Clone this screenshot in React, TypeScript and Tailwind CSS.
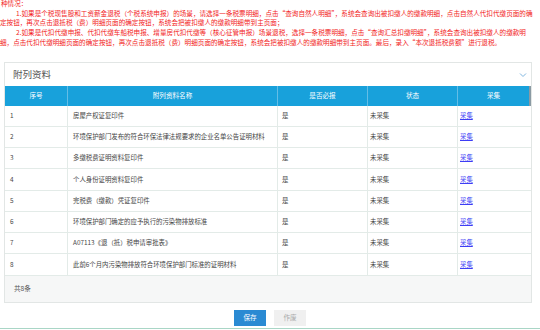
const rows = [
  "房屋产权证复印件",
  "环境保护部门发布的符合环保法律法规要求的企业名单公告证明材料",
  "多缴税费证明资料复印件",
  "个人身份证明资料复印件",
  "完税费（缴款）凭证复印件",
  "环境保护部门确定的应予执行的污染物排放标准",
  "A07113《退（抵）税申请审批表》",
  "此前6个月内污染物排放符合环境保护部门标准的证明材料",
];

const font = { fontFamily: '"Noto Sans CJK SC", "Noto Sans", sans-serif' };

function Cell({ w, children, last }: { w: string; children?: React.ReactNode; last?: boolean }) {
  return (
    <div
      className={`${w} h-full flex items-center px-[5px] ${last ? "" : "border-r border-[#e3ebe8]"}`}
    >
      {children}
    </div>
  );
}

export default function App() {
  return (
    <div className="w-[540px] h-[330px] bg-white overflow-hidden relative" style={font}>
      <div className="text-[6.6px] leading-[9.7px] text-[#f21c1c] mt-[-1px] whitespace-nowrap">
        <div className="pl-[1px]">种情况：</div>
        <div className="pl-[16px]">
          1.如果是个税现售股和工资薪金退税（个税系统申报）的场景，请选择一条税票明细，点击“查询自然人明细”，系统会查询出被扣缴人的缴款明细，点击自然人代扣代缴页面的确
        </div>
        <div>定按钮，再次点击退抵税（费）明细页面的确定按钮，系统会把被扣缴人的缴款明细带到主页面；</div>
        <div className="pl-[16px]">
          2.如果是代扣代缴申报、代扣代缴车船税申报、增量房代扣代缴等（核心征管申报）场景退税，选择一条税票明细，点击“查询汇总扣缴明细”，系统会查询出被扣缴人的缴款明
        </div>
        <div>
          细，点击代扣代缴明细页面的确定按钮，再次点击退抵税（费）明细页面的确定按钮，系统会把被扣缴人的缴款明细带到主页面。最后，录入“本次退抵税费额”进行退税。
        </div>
      </div>

      <div className="ml-[4px] mt-[14px] w-[528px] border border-[#e2e6e5]">
        <div className="h-[23px] flex items-center justify-between pl-[8px] pr-[4px]">
          <span className="text-[9.5px] text-[#555]">附列资料</span>
          <svg width="8" height="6" viewBox="0 0 8 6" className="mt-[1px]">
            <path d="M1 1.5 L4 4.5 L7 1.5" fill="none" stroke="#7fb6e0" strokeWidth="1" />
          </svg>
        </div>
        <div className="h-[20px] flex bg-[#18a1db] text-white text-[6.6px] border-r-2 border-[#8a9aa3]">
          <div className="w-[63px] flex items-center justify-center border-r border-[#64bde6]">序号</div>
          <div className="w-[210px] flex items-center justify-center border-r border-[#64bde6]">附列资料名称</div>
          <div className="w-[90px] flex items-center justify-center border-r border-[#64bde6]">是否必报</div>
          <div className="w-[90px] flex items-center justify-center border-r border-[#64bde6]">状态</div>
          <div className="flex-1 flex items-center justify-center">采集</div>
        </div>
        {rows.map((name, i) => (
          <div
            key={i}
            className="h-[21.25px] flex text-[6.4px] text-[#444] border-b border-[#e3ebe8]"
          >
            <Cell w="w-[63px]">{i + 1}</Cell>
            <Cell w="w-[210px]">{name}</Cell>
            <Cell w="w-[90px]">
              <span className="-ml-[1px]">是</span>
            </Cell>
            <Cell w="w-[90px]">
              <span className="-ml-[3px]">未采集</span>
            </Cell>
            <Cell w="flex-1" last>
              <span className="-ml-[3px] text-[#3d3df5] underline">采集</span>
            </Cell>
          </div>
        ))}
        <div className="h-[26px] bg-[#f6f7f7] flex items-center pl-[9px] text-[6.6px] text-[#555]">
          共8条
        </div>
      </div>

      <div className="flex justify-center gap-[8px] mt-[7px] text-[6.6px]">
        <button className="w-[32px] h-[16px] bg-[#2a8ad3] text-white">保存</button>
        <button className="w-[32px] h-[16px] bg-[#f0f0f0] text-[#aaa]">作废</button>
      </div>
      <div className="mt-[2px] h-[1.5px] bg-[#a9d6c6]" />
    </div>
  );
}
